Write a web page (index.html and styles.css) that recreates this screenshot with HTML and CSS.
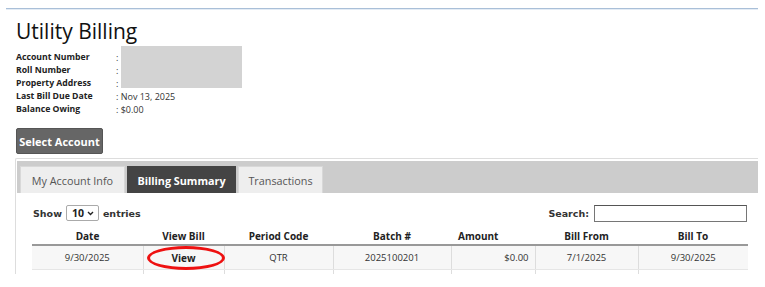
FILE: index.html
```html
<!DOCTYPE html>
<html>
<head>
<meta charset="utf-8">
<link rel="stylesheet" href="styles.css">
</head>
<body>
<div class="topline"></div>
<div class="page">
  <h1 class="title">Utility Billing</h1>
  <div class="info">
    <div class="info-grid">
      <span class="lbl">Account Number</span><span class="val">: </span>
      <span class="lbl">Roll Number</span><span class="val">: </span>
      <span class="lbl">Property Address</span><span class="val">: </span>
      <span class="lbl">Last Bill Due Date</span><span class="val">: Nov 13, 2025</span>
      <span class="lbl">Balance Owing</span><span class="val">: $0.00</span>
    </div>
    <div class="redact"></div>
  </div>
  <button class="btn">Select Account</button>
  <div class="tabs">
    <div class="tabnav">
      <div class="tab t1">My Account Info</div>
      <div class="tab active">Billing Summary</div>
      <div class="tab t3">Transactions</div>
    </div>
    <div class="panel">
      <div class="controls">
        <div class="length">Show <span class="sel">10 <svg width="7" height="5" viewBox="0 0 7 5"><path d="M1 1l2.5 2.5L6 1" fill="none" stroke="#222" stroke-width="1.4"/></svg></span> entries</div>
        <div class="search">Search: <span class="input"></span></div>
      </div>
      <table class="grid">
        <colgroup>
          <col style="width:111px"><col style="width:81px"><col style="width:109px"><col style="width:118px"><col style="width:84px"><col style="width:103px"><col style="width:110px">
        </colgroup>
        <thead>
          <tr><th>Date</th><th>View Bill</th><th>Period Code</th><th>Batch #</th><th class="amt-h">Amount</th><th>Bill From</th><th>Bill To</th></tr>
        </thead>
        <tbody>
          <tr class="odd"><td>9/30/2025</td><td class="view"><span class="ring"></span>View</td><td>QTR</td><td>2025100201</td><td class="amt">$0.00</td><td>7/1/2025</td><td>9/30/2025</td></tr>
          <tr><td>&nbsp;</td><td></td><td></td><td></td><td></td><td></td><td></td></tr>
        </tbody>
      </table>
    </div>
  </div>
</div>
</body>
</html>
```

FILE: styles.css
```css
html, body {
  margin: 0;
  padding: 0;
  background: #fff;
}
body {
  font-family: "Open Sans", "DejaVu Sans", sans-serif;
  color: #222;
}
.topline {
  margin: 8px 7px 0 6px;
  height: 1px;
  background: #a9bfd8;
  border-bottom: 1px solid #e4ecf5;
}
.page {
  padding-left: 15px;
}
.title {
  margin: 6px 0 0 1px;
  font-size: 21px;
  font-weight: 400;
  line-height: 30px;
  color: #111;
}
.info {
  position: relative;
  margin-top: 5px;
  margin-left: 1px;
}
.info-grid {
  display: grid;
  grid-template-columns: 100px auto;
  font-size: 8.7px;
  line-height: 13px;
}
.lbl {
  font-weight: 700;
  color: #222;
}
.val {
  color: #333;
  font-size: 9px;
}
.redact {
  position: absolute;
  left: 105px;
  top: -5px;
  width: 121px;
  height: 42px;
  background: #d3d3d3;
}
.btn {
  display: block;
  margin: 12px 0 0 1px;
  width: 87px;
  height: 26px;
  padding: 0;
  background: #666;
  border: 1px solid #555;
  border-radius: 2px;
  color: #fff;
  font-family: "Open Sans", sans-serif;
  font-weight: 700;
  font-size: 11px;
}
.tabs {
  margin-top: 4px;
  width: 741px;
  height: 113px;
  overflow: hidden;
  border: 1px solid #ddd;
  border-right: none;
  border-bottom: none;
  border-radius: 2px 0 0 0;
  padding: 2px 0 0 1px;
}
.tabnav {
  display: flex;
  gap: 2px;
  align-items: flex-end;
  height: 32px;
  background: #cccccc;
  padding: 0 0 0 3px;
  box-sizing: border-box;
}
.tab {
  height: 27px;
  display: flex;
  align-items: center;
  justify-content: center;
  white-space: nowrap;
  background: #eee;
  border: 1px solid #d8d8d8;
  border-bottom: none;
  box-sizing: border-box;
  padding: 0;
  font-size: 10.8px;
  color: #555;
}
.tab.t1 {
  width: 105px;
}
.tab.active {
  background: #444;
  border-color: #444;
  color: #fff;
  font-weight: 700;
  width: 109px;
}
.tab.t3 {
  width: 85px;
}
.panel {
  padding: 11px 0 0 15px;
}
.controls {
  display: flex;
  justify-content: space-between;
  align-items: center;
  width: 716px;
  height: 18px;
  font-family: "DejaVu Sans", Verdana, sans-serif;
  font-weight: 700;
  font-size: 9.5px;
  color: #333;
}
.length {
  display: flex;
  align-items: center;
  gap: 4px;
  padding-left: 1px;
}
.sel {
  display: inline-flex;
  align-items: center;
  gap: 3px;
  height: 16px;
  width: 33px;
  box-sizing: border-box;
  padding: 0 3px 0 5px;
  border: 1px solid #aaa;
  border-radius: 2px;
  font-family: "Open Sans", sans-serif;
  font-size: 10.5px;
  color: #222;
}
.search {
  display: flex;
  align-items: center;
  gap: 5px;
  padding-right: 1px;
}
.input {
  display: block;
  width: 153px;
  height: 17px;
  box-sizing: border-box;
  border: 1px solid #767676;
  border-top-color: #555;
  background: #fff;
}
.grid {
  margin-top: 6px;
  width: 716px;
  border-collapse: collapse;
  table-layout: fixed;
  font-size: 9.5px;
  color: #333;
}
.grid th {
  height: 16px;
  padding: 0;
  font-size: 10px;
  font-weight: 700;
  text-align: center;
  border-bottom: 2px solid #999;
  line-height: 16px;
  color: #222;
}
.grid th.amt-h {
  text-align: left;
  padding-left: 7px;
}
.grid td {
  height: 23px;
  padding: 0;
  text-align: center;
  border-left: 1px solid #ddd;
  border-bottom: 1px solid #e6e6e6;
}
.grid td:first-child {
  border-left: none;
}
.grid tr.odd td {
  background: #f7f7f7;
}
.grid td.amt {
  text-align: right;
  padding-right: 6px;
}
.grid td.view {
  position: relative;
  font-weight: 700;
  color: #222;
  font-size: 10px;
}
.ring {
  position: absolute;
  left: 3px;
  top: 0;
  width: 78px;
  height: 24px;
  box-sizing: border-box;
  border: 3px solid #e11;
  border-radius: 50%;
}
```
